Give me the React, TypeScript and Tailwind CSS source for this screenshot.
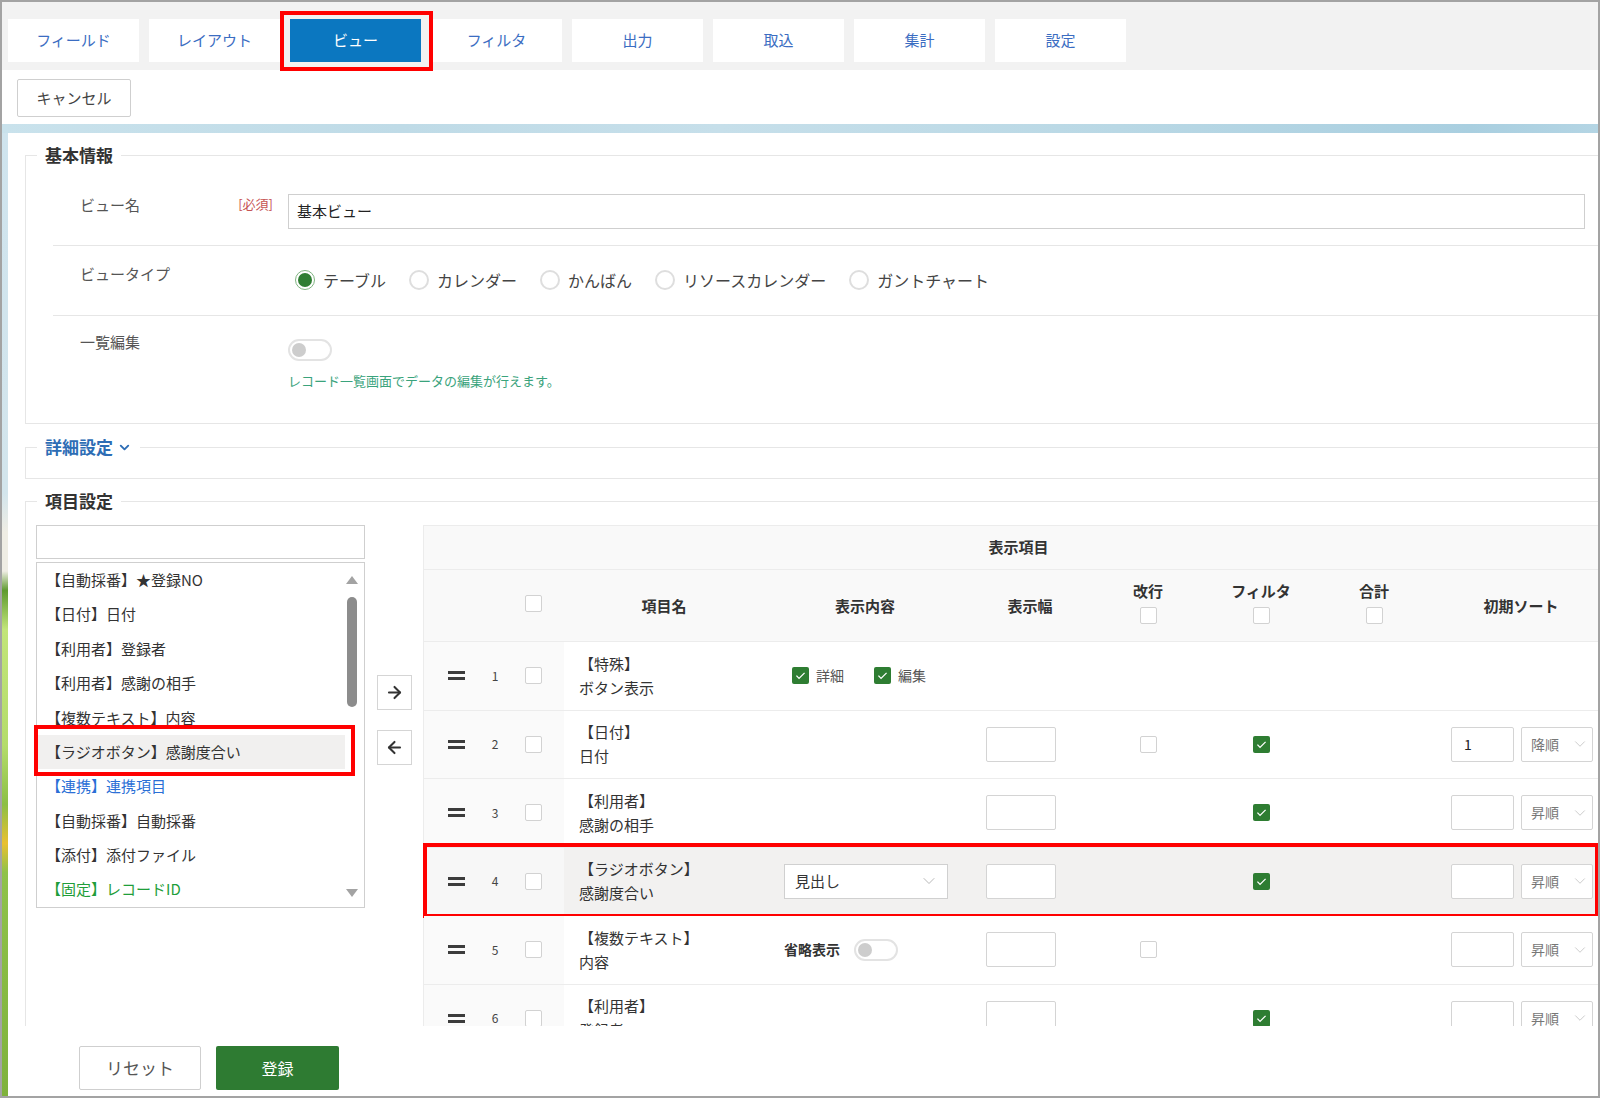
import { ArrowLeft, ArrowRight, ChevronDown } from 'lucide-react'

const tabs = ['フィールド', 'レイアウト', 'ビュー', 'フィルタ', '出力', '取込', '集計', '設定']

const viewTypes = ['テーブル', 'カレンダー', 'かんばん', 'リソースカレンダー', 'ガントチャート']

const fields = [
  { text: '【自動採番】★登録NO', color: 'text-[#333]' },
  { text: '【日付】日付', color: 'text-[#333]' },
  { text: '【利用者】登録者', color: 'text-[#333]' },
  { text: '【利用者】感謝の相手', color: 'text-[#333]' },
  { text: '【複数テキスト】内容', color: 'text-[#333]' },
  { text: '【ラジオボタン】感謝度合い', color: 'text-[#333]', selected: true },
  { text: '【連携】連携項目', color: 'text-[#2a6fd6]' },
  { text: '【自動採番】自動採番', color: 'text-[#333]' },
  { text: '【添付】添付ファイル', color: 'text-[#333]' },
  { text: '【固定】レコードID', color: 'text-[#1f9e3a]' },
]

interface Row {
  n: number
  type: string
  name: string
  disp?: 'checks' | 'select' | 'toggle'
  width?: boolean
  br?: boolean
  filter?: boolean
  sort?: { value: string; order: string }
  highlight?: boolean
}

const rows: Row[] = [
  { n: 1, type: '【特殊】', name: 'ボタン表示', disp: 'checks' },
  { n: 2, type: '【日付】', name: '日付', width: true, br: false, filter: true, sort: { value: '1', order: '降順' } },
  { n: 3, type: '【利用者】', name: '感謝の相手', width: true, filter: true, sort: { value: '', order: '昇順' } },
  { n: 4, type: '【ラジオボタン】', name: '感謝度合い', disp: 'select', width: true, filter: true, sort: { value: '', order: '昇順' }, highlight: true },
  { n: 5, type: '【複数テキスト】', name: '内容', disp: 'toggle', width: true, br: false, sort: { value: '', order: '昇順' } },
  { n: 6, type: '【利用者】', name: '登録者', width: true, filter: true, sort: { value: '', order: '昇順' } },
]

function Checkbox({ checked = false }: { checked?: boolean }) {
  if (checked) {
    return (
      <span className="flex h-[17px] w-[17px] items-center justify-center rounded-[2px] bg-[#2e7d32]">
        <svg viewBox="0 0 16 16" className="h-[13px] w-[13px]">
          <path d="M3 8.2l3.2 3.3L13 4.8" fill="none" stroke="#fff" strokeWidth="1.6" />
        </svg>
      </span>
    )
  }
  return <span className="block h-[17px] w-[17px] rounded-[2px] border border-[#d2d2d2] bg-white" />
}

function Toggle() {
  return (
    <span className="flex h-[22px] w-[44px] items-center rounded-full border-2 border-[#e3e3e3] bg-white px-[2px]">
      <span className="h-[14px] w-[14px] rounded-full bg-[#cdcdcd]" />
    </span>
  )
}

function Radio({ checked = false }: { checked?: boolean }) {
  return checked ? (
    <span className="flex h-[20px] w-[20px] items-center justify-center rounded-full border border-[#7fb481] bg-white">
      <span className="h-[14px] w-[14px] rounded-full bg-[#2e7d32]" />
    </span>
  ) : (
    <span className="block h-[20px] w-[20px] rounded-full border-2 border-[#dedede] bg-white" />
  )
}

export default function App() {
  return (
    <div className="flex h-[1098px] w-[1600px] flex-col overflow-hidden border-2 border-[#a3a3a3] bg-white font-['Noto_Sans_CJK_JP','Noto_Sans',sans-serif] text-[#333]">
      {/* tabs */}
      <div className="flex h-[68px] shrink-0 gap-[10px] bg-[#f2f2f2] pl-[6px] pt-[17px]">
        {tabs.map(t =>
          t === 'ビュー' ? (
            <div key={t} className="relative flex h-[43px] w-[131px] items-center justify-center bg-[#0b77c0] text-[15px] text-white">
              {t}
              <span className="pointer-events-none absolute -bottom-[9px] -left-[10px] -right-[12px] -top-[8px] border-4 border-[#ff0000]" />
            </div>
          ) : (
            <div key={t} className="flex h-[43px] w-[131px] items-center justify-center bg-white text-[15px] text-[#3b6dc2]">
              {t}
            </div>
          )
        )}
      </div>

      {/* cancel */}
      <div className="h-[54px] shrink-0 pl-[15px] pt-[9px]">
        <button className="h-[38px] w-[114px] rounded-[2px] border border-[#cfcfcf] bg-white text-[15px] text-[#444]">キャンセル</button>
      </div>

      <div className="flex min-h-0 flex-1 flex-col bg-[image:linear-gradient(to_bottom,#cfe4ee_0%,#d3e5ec_38%,#efede4_42%,#efede4_46%,#5e9a2e_48%,#c2e57a_52%,#b4dc6a_64%,#8cbf45_70%,#e9c030_74%,#8fc24a_77%,#7fb23c_100%)]">
        <div className="h-[9px] shrink-0 bg-[image:linear-gradient(90deg,#c9e2ec_0%,#bfdbe7_25%,#c6dfea_45%,#b9d8e5_70%,#a9cfe0_92%,#b4d5e4_100%)]" />
        <div className="ml-[6px] flex min-h-0 flex-1 flex-col bg-white">
          <div className="h-[893px] shrink-0 overflow-hidden pl-[17px] pt-[10px]">
            {/* 基本情報 */}
            <fieldset className="w-[1600px] border border-[#e6e6e6]">
              <legend className="ml-[11px] px-[8px] text-[17px] font-bold leading-[24px] text-[#333]">基本情報</legend>
              <div className="ml-[27px]">
                <div className="flex h-[79px] items-start border-b border-[#e6e6e6] pt-[27px]">
                  <div className="flex w-[220px] items-start justify-between pl-[27px] pt-px">
                    <span className="text-[15px] leading-[20px] text-[#555]">ビュー名</span>
                    <span className="text-[13px] leading-[18px] text-[#c65353]">[必須]</span>
                  </div>
                  <div className="ml-[15px] flex h-[35px] w-[1297px] items-center border border-[#cfcfcf] px-[8px] text-[15px] text-[#222]">
                    基本ビュー
                  </div>
                </div>
                <div className="flex h-[70px] items-start border-b border-[#e6e6e6] pt-[18px]">
                  <div className="w-[235px] pl-[27px] text-[15px] leading-[20px] text-[#555]">ビュータイプ</div>
                  <div className="mt-[6px] flex items-center gap-[23px] pl-[7px]">
                    {viewTypes.map((v, i) => (
                      <label key={v} className="flex items-center gap-[8px] text-[16px] leading-[20px] text-[#444]">
                        <Radio checked={i === 0} />
                        {v}
                      </label>
                    ))}
                  </div>
                </div>
                <div className="flex h-[107px] items-start pt-[16px]">
                  <div className="w-[235px] pl-[27px] text-[15px] leading-[20px] text-[#555]">一覧編集</div>
                  <div className="flex flex-col pt-[7px]">
                    <Toggle />
                    <span className="mt-[11px] text-[13px] leading-[18px] text-[#3aa37c]">レコード一覧画面でデータの編集が行えます。</span>
                  </div>
                </div>
              </div>
            </fieldset>

            {/* 詳細設定 */}
            <fieldset className="mt-[11px] w-[1600px] border border-[#e6e6e6]">
              <legend className="ml-[11px] px-[8px] text-[17px] font-bold leading-[24px] text-[#2d6db5]">
                <span className="flex items-center gap-[4px]">
                  詳細設定
                  <ChevronDown size={15} strokeWidth={3} />
                </span>
              </legend>
              <div className="h-[19px]" />
            </fieldset>

            {/* 項目設定 */}
            <fieldset className="mt-[10px] w-[1600px] border border-[#e6e6e6]">
              <legend className="ml-[11px] px-[8px] text-[17px] font-bold leading-[24px] text-[#333]">項目設定</legend>
              <div className="flex items-start pl-[10px] pt-[12px]">
                {/* field list */}
                <div className="w-[329px] shrink-0">
                  <div className="h-[34px] border border-[#cfcfcf] bg-white" />
                  <div className="relative mt-[3px] flex h-[346px] border border-[#cfcfcf] bg-white">
                    <div className="flex-1 pl-px">
                      {fields.map(f => (
                        <div
                          key={f.text}
                          className={`flex h-[34.4px] items-center pl-[8px] text-[15px] ${f.color} ${f.selected ? 'bg-[#f1f0ef]' : ''}`}
                        >
                          {f.text}
                        </div>
                      ))}
                    </div>
                    <div className="flex w-[19px] flex-col items-center pb-[10px] pr-[5px] pt-[13px]">
                      <svg viewBox="0 0 12 8" className="h-[8px] w-[12px]">
                        <path d="M6 0L12 8H0z" fill="#a3a3a3" />
                      </svg>
                      <span className="mt-[13px] h-[110px] w-[10px] rounded-full bg-[#8c8c8c]" />
                      <span className="flex-1" />
                      <svg viewBox="0 0 12 8" className="h-[8px] w-[12px]">
                        <path d="M0 0H12L6 8z" fill="#a3a3a3" />
                      </svg>
                    </div>
                    <span className="pointer-events-none absolute left-[-3px] top-[162px] h-[51px] w-[321px] border-4 border-[#ff0000]" />
                  </div>
                </div>

                {/* move buttons */}
                <div className="ml-[12px] flex w-[35px] shrink-0 flex-col pt-[150px]">
                  <div className="flex h-[35px] items-center justify-center border border-[#d5d5d5] bg-white text-[#333]">
                    <ArrowRight size={19} strokeWidth={2.6} />
                  </div>
                  <div className="mt-[20px] flex h-[35px] items-center justify-center border border-[#d5d5d5] bg-white text-[#333]">
                    <ArrowLeft size={19} strokeWidth={2.6} />
                  </div>
                </div>

                {/* table */}
                <div className="ml-[11px] w-[1190px] shrink-0 border-l border-t border-[#ececec]">
                  <div className="flex h-[44px] items-center justify-center border-b border-[#ececec] bg-[#f9f9f9] text-[15px] font-bold text-[#333]">
                    表示項目
                  </div>
                  <div className="flex h-[72px] items-center border-b border-[#ececec] bg-[#f9f9f9] text-[15px] font-bold leading-[20px] text-[#333]">
                    <div className="w-[64px] shrink-0" />
                    <div className="w-[14px] shrink-0" />
                    <div className="flex w-[62px] shrink-0 justify-center pb-[4px]">
                      <Checkbox />
                    </div>
                    <div className="w-[200px] shrink-0 text-center">項目名</div>
                    <div className="w-[202px] shrink-0 text-center">表示内容</div>
                    <div className="w-[128px] shrink-0 text-center">表示幅</div>
                    <div className="flex w-[108px] shrink-0 flex-col items-center gap-[6px] pb-[6px]">
                      <span>改行</span>
                      <Checkbox />
                    </div>
                    <div className="flex w-[118px] shrink-0 flex-col items-center gap-[6px] pb-[6px]">
                      <span>フィルタ</span>
                      <Checkbox />
                    </div>
                    <div className="flex w-[108px] shrink-0 flex-col items-center gap-[6px] pb-[6px]">
                      <span>合計</span>
                      <Checkbox />
                    </div>
                    <div className="w-[186px] shrink-0 text-center">初期ソート</div>
                  </div>

                  {rows.map(r => (
                    <div
                      key={r.n}
                      className={`relative flex h-[68.5px] items-center border-b border-[#ececec] ${r.highlight ? 'bg-[#f2f1f0]' : 'bg-white'}`}
                    >
                      <div className={`flex h-full w-[140px] shrink-0 items-center ${r.highlight ? 'bg-[#f7f7f7]' : 'bg-[#fafafa]'}`}>
                        <div className="flex w-[64px] justify-center">
                          <span className="flex w-[17px] flex-col gap-[3px]">
                            <span className="h-[3px] bg-[#3c3c3c]" />
                            <span className="h-[3px] bg-[#3c3c3c]" />
                          </span>
                        </div>
                        <div className="w-[14px] text-center text-[12px] text-[#444]">{r.n}</div>
                        <div className="flex w-[62px] justify-center">
                          <Checkbox />
                        </div>
                      </div>
                      <div className="w-[200px] shrink-0 pl-[15px] text-[15px] leading-[24px] text-[#333]">
                        <div>{r.type}</div>
                        <div>{r.name}</div>
                      </div>
                      <div className="w-[202px] shrink-0">
                        {r.disp === 'checks' && (
                          <div className="flex items-center pl-[28px] text-[14px] text-[#555]">
                            <Checkbox checked />
                            <span className="ml-[7px]">詳細</span>
                            <span className="ml-[30px]">
                              <Checkbox checked />
                            </span>
                            <span className="ml-[7px]">編集</span>
                          </div>
                        )}
                        {r.disp === 'select' && (
                          <div className="pl-[20px]">
                            <div className="relative flex h-[35px] w-[164px] items-center border border-[#d0d0d0] bg-white pl-[10px] text-[15px] text-[#333]">
                              見出し
                              <ChevronDown size={20} strokeWidth={1} className="absolute right-[8px] text-[#aaa]" />
                            </div>
                          </div>
                        )}
                        {r.disp === 'toggle' && (
                          <div className="flex items-center pl-[20px]">
                            <span className="text-[14px] font-bold text-[#333]">省略表示</span>
                            <span className="ml-[14px]">
                              <Toggle />
                            </span>
                          </div>
                        )}
                      </div>
                      <div className="w-[128px] shrink-0 pl-[20px]">
                        {r.width && <div className="h-[35px] w-[70px] rounded-[2px] border border-[#d4d4d4] bg-white" />}
                      </div>
                      <div className="flex w-[108px] shrink-0 justify-center">{r.br !== undefined && <Checkbox checked={r.br} />}</div>
                      <div className="flex w-[118px] shrink-0 justify-center">{r.filter && <Checkbox checked />}</div>
                      <div className="w-[108px] shrink-0" />
                      <div className="flex w-[186px] shrink-0 items-center gap-[7px] pl-[23px]">
                        {r.sort && (
                          <>
                            <div className="flex h-[35px] w-[63px] items-center rounded-[2px] border border-[#d4d4d4] bg-white pl-[12px] text-[14px] text-[#222]">
                              {r.sort.value}
                            </div>
                            <div className="relative flex h-[35px] w-[72px] items-center overflow-hidden rounded-[2px] border border-[#d4d4d4] bg-white pl-[9px] text-[14px] text-[#777]">
                              {r.sort.order}
                              <ChevronDown size={18} strokeWidth={1} className="absolute right-[3px] text-[#bbb]" />
                            </div>
                          </>
                        )}
                      </div>
                      {r.highlight && (
                        <span className="pointer-events-none absolute left-[-1px] top-[-5px] h-[75px] w-[1176px] border-4 border-[#ff0000]" />
                      )}
                    </div>
                  ))}
                </div>
              </div>
            </fieldset>
          </div>

          {/* footer */}
          <div className="flex gap-[15px] pl-[71px] pt-[20px]">
            <button className="h-[44px] w-[122px] rounded-[2px] border border-[#cfcfcf] bg-white text-[17px] text-[#555]">リセット</button>
            <button className="h-[44px] w-[123px] rounded-[2px] bg-[#2e7b32] text-[16px] text-white">登録</button>
          </div>
        </div>
      </div>
    </div>
  )
}
